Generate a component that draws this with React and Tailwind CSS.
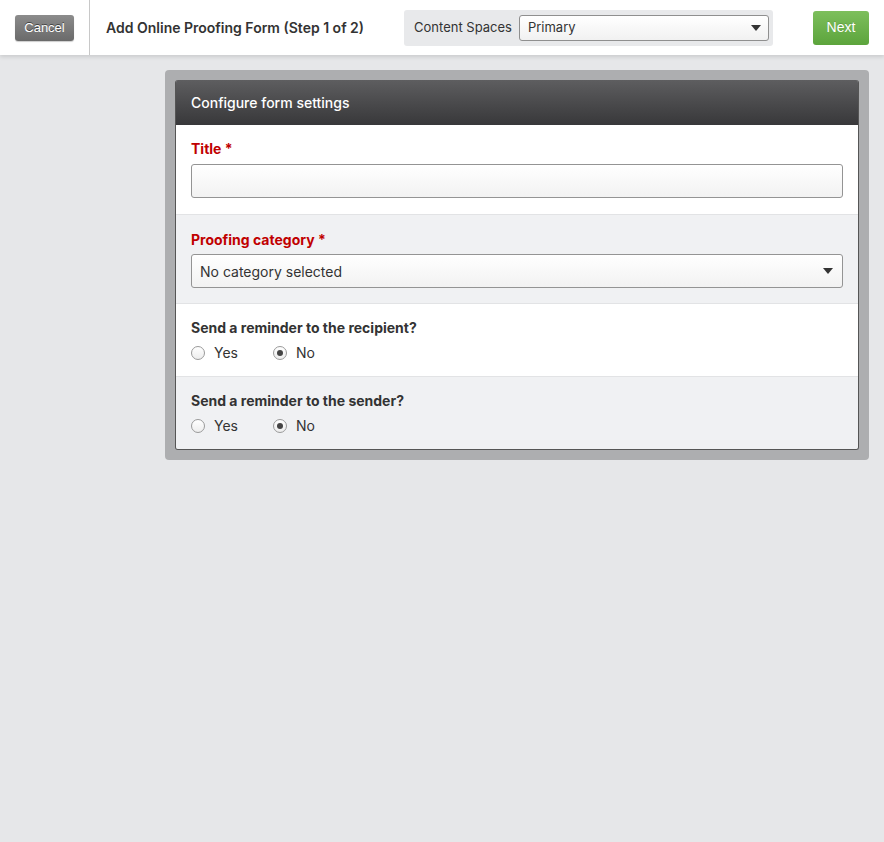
import { useState } from 'react'

function Caret() {
  return (
    <svg width="10" height="6" viewBox="0 0 10 6" className="shrink-0">
      <path d="M0 0 L10 0 L5 6 Z" fill="#333" />
    </svg>
  )
}

function Radio({ checked, label, onClick }) {
  return (
    <button type="button" onClick={onClick} className="flex items-center gap-[9px] text-[14px] text-[#333]">
      <span className="w-[14px] h-[14px] rounded-full border border-[#9a9a9a] bg-gradient-to-b from-white to-[#ededed] flex items-center justify-center">
        {checked && <span className="w-[6px] h-[6px] rounded-full bg-[#444]" />}
      </span>
      {label}
    </button>
  )
}

function Section({ bg, children, className }) {
  return <div className={`${bg} border-t border-[#e2e3e5] px-[15px] ${className}`}>{children}</div>
}

export default function App() {
  const [recipient, setRecipient] = useState('no')
  const [sender, setSender] = useState('no')

  return (
    <div className="min-h-screen bg-[#e6e7e9] font-['Inter',sans-serif] text-[#333]">
      <header className="h-[55px] bg-white flex items-center shadow-[0_2px_4px_rgba(0,0,0,0.12)] relative z-10">
        <div className="w-[90px] h-full flex items-center pl-[15px] border-r border-[#c8c8c8]">
          <button className="w-[59px] h-[26px] rounded-[3px] bg-gradient-to-b from-[#8c8c8c] to-[#6a6a6a] text-white text-[13px] font-['Liberation_Sans',sans-serif] [text-shadow:0_-1px_0_rgba(0,0,0,0.5)] shadow-[0_1px_1px_rgba(0,0,0,0.2)]">
            Cancel
          </button>
        </div>
        <h1 className="ml-[16px] text-[14px] font-semibold text-[#333]">Add Online Proofing Form (Step 1 of 2)</h1>
        <div className="ml-[40px] h-[36px] w-[369px] bg-[#e8e9eb] rounded-[3px] flex items-center pl-[10px] pr-[4px] gap-[7px]">
          <span className="text-[13px] text-[#333]">Content Spaces</span>
          <div className="flex-1 h-[26px] rounded-[3px] border border-[#8f8f8f] bg-gradient-to-b from-white to-[#f1f1f1] flex items-center justify-between pl-[8px] pr-[7px] text-[13px]">
            Primary
            <Caret />
          </div>
        </div>
        <button className="ml-auto mr-[15px] w-[56px] h-[34px] rounded-[3px] bg-gradient-to-b from-[#7dbf5c] to-[#5ca43c] text-white text-[14px] font-['Liberation_Sans',sans-serif] [text-shadow:0_-1px_0_rgba(0,0,0,0.15)]">
          Next
        </button>
      </header>

      <div className="pt-[15px] pl-[165px] pr-[15px]">
        <div className="bg-[#adaeb0] rounded-[4px] p-[10px]">
          <div className="rounded-[3px] overflow-hidden border border-[#555] border-t-0">
            <div className="h-[45px] bg-gradient-to-b from-[#5e5e60] to-[#38383a] flex items-center px-[15px]">
              <span className="text-white text-[14px] font-medium">Configure form settings</span>
            </div>
            <div className="bg-white px-[15px] pt-[15px] pb-[16px]">
              <label className="block text-[14px] font-bold text-[#c00000] leading-[17px] mb-[7px]">
                Title <span>*</span>
              </label>
              <input className="w-full h-[34px] rounded-[3px] border border-[#949494] bg-gradient-to-b from-white to-[#f2f2f2] outline-none px-[8px] text-[14px]" />
            </div>
            <Section bg="bg-[#f0f1f3]" className="pt-[16px] pb-[15px]">
              <label className="block text-[14px] font-bold text-[#c00000] leading-[17px] mb-[6px]">
                Proofing category <span>*</span>
              </label>
              <div className="w-full h-[34px] rounded-[3px] border border-[#949494] bg-gradient-to-b from-white to-[#f2f2f2] flex items-center justify-between pl-[8px] pr-[9px] text-[14px] text-[#333]">
                No category selected
                <Caret />
              </div>
            </Section>
            <Section bg="bg-white" className="pt-[15px] pb-[13px]">
              <div className="text-[14px] font-bold leading-[17px] mb-[6px]">Send a reminder to the recipient?</div>
              <div className="flex gap-[35px]">
                <Radio label="Yes" checked={recipient === 'yes'} onClick={() => setRecipient('yes')} />
                <Radio label="No" checked={recipient === 'no'} onClick={() => setRecipient('no')} />
              </div>
            </Section>
            <Section bg="bg-[#f0f1f3]" className="pt-[15px] pb-[13px]">
              <div className="text-[14px] font-bold leading-[17px] mb-[6px]">Send a reminder to the sender?</div>
              <div className="flex gap-[35px]">
                <Radio label="Yes" checked={sender === 'yes'} onClick={() => setSender('yes')} />
                <Radio label="No" checked={sender === 'no'} onClick={() => setSender('no')} />
              </div>
            </Section>
          </div>
        </div>
      </div>
    </div>
  )
}
